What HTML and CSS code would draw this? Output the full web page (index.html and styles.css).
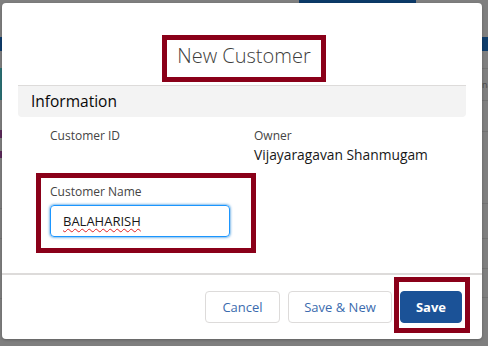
FILE: index.html
```html
<!DOCTYPE html>
<html>
<head>
<meta charset="utf-8">
<title>New Customer</title>
<link rel="stylesheet" href="styles.css">
</head>
<body>
<div class="backdrop">
  <div class="strip strip-left"></div>
  <div class="page-mid">
    <div class="topbar"><div class="topbar-seg"></div></div>
  </div>
  <div class="strip strip-right"><span class="peek">na</span></div>
</div>
<div class="modal">
  <header class="modal-header">
    <h2 class="title">New Customer</h2>
  </header>
  <div class="modal-body">
    <div class="section-bar">Information</div>
    <div class="fields">
      <div class="field">
        <div class="label">Customer ID</div>
      </div>
      <div class="field">
        <div class="label">Owner</div>
        <div class="value">Vijayaragavan Shanmugam</div>
      </div>
      <div class="field field-name">
        <div class="label">Customer Name</div>
        <div class="input"><span class="typed">BALAHARISH</span></div>
      </div>
    </div>
  </div>
  <footer class="modal-footer">
    <button class="btn btn-neutral btn-cancel">Cancel</button>
    <button class="btn btn-neutral btn-savenew">Save &amp; New</button>
    <button class="btn btn-brand">Save</button>
  </footer>
  <div class="mark mark-title"></div>
  <div class="mark mark-name"></div>
  <div class="mark mark-save"></div>
</div>
</body>
</html>
```

FILE: styles.css
```css
* { box-sizing: border-box; }
html, body {
  margin: 0;
  padding: 0;
  width: 488px;
  height: 346px;
  overflow: hidden;
  background: #7f7f7f;
  font-family: "Open Sans", "Liberation Sans", sans-serif;
}
.backdrop {
  display: flex;
  width: 488px;
  height: 346px;
}
.strip { height: 346px; }
.strip-left {
  width: 2px;
  background: linear-gradient(to bottom,
    #7f7f7f 0, #7f7f7f 37px,
    #0f3d6b 37px, #0f3d6b 51px,
    #7f7f7f 51px, #7f7f7f 68px,
    #2b7074 68px, #2b7074 100px,
    #7f7f7f 100px, #7f7f7f 130px,
    #5b2a5a 130px, #5b2a5a 138px,
    #7f7f7f 138px, #7f7f7f 151px,
    #5b2a5a 151px, #5b2a5a 158px,
    #7f7f7f 158px, #7f7f7f 208px,
    #727272 208px, #727272 209px,
    #7f7f7f 209px, #7f7f7f 238px,
    #727272 238px, #727272 239px,
    #7f7f7f 239px, #7f7f7f 298px,
    #727272 298px, #727272 299px,
    #7f7f7f 299px);
}
.page-mid { flex: 1; }
.topbar {
  display: flex;
  height: 3px;
  padding-left: 297px;
}
.topbar-seg {
  width: 117px;
  height: 3px;
  background: #0c3a68;
}
.strip-right {
  width: 6px;
  overflow: hidden;
  background: linear-gradient(to bottom,
    #7f7f7f 0, #7f7f7f 37px,
    #0f3d6b 37px, #0f3d6b 51px,
    #7f7f7f 51px, #7f7f7f 68px,
    #727272 68px, #727272 69px,
    #7f7f7f 69px, #7f7f7f 100px,
    #727272 100px, #727272 101px,
    #7f7f7f 101px, #7f7f7f 131px,
    #727272 131px, #727272 132px,
    #7f7f7f 132px, #7f7f7f 203px,
    #727272 203px, #727272 204px,
    #7f7f7f 204px, #7f7f7f 238px,
    #727272 238px, #727272 239px,
    #7f7f7f 239px, #7f7f7f 268px,
    #727272 268px, #727272 269px,
    #7f7f7f 269px, #7f7f7f 297px,
    #727272 297px, #727272 298px,
    #7f7f7f 298px);
}
.peek {
  display: block;
  margin-top: 76px;
  font-size: 9px;
  line-height: 18px;
  color: #2a2a2a;
  opacity: 0.6;
}

.modal {
  position: absolute;
  left: 2px;
  top: 3px;
  width: 480px;
  height: 336px;
  background: #ffffff;
  border-radius: 4px;
  box-shadow: 0 1px 3px rgba(0,0,0,0.25);
  display: flex;
  flex-direction: column;
}
.modal-header {
  padding: 38px 0 14px;
  display: flex;
  justify-content: center;
}
.title {
  margin: 0;
  font-size: 20px;
  font-weight: 300;
  line-height: 30px;
  color: #3e3e3c;
  padding-left: 4px;
}
.modal-body {
  flex: 1;
}
.section-bar {
  margin: 0 16px;
  height: 32px;
  background: #f3f3f3;
  border-top: 1px solid #dddbda;
  border-radius: 0 0 4px 4px;
  padding-left: 13px;
  font-size: 15.5px;
  line-height: 31px;
  color: #080707;
}
.fields {
  display: grid;
  grid-template-columns: 204px 204px;
  row-gap: 18px;
  padding: 10px 0 0 48px;
}
.label {
  font-size: 12px;
  line-height: 18px;
  color: #444444;
}
.value {
  font-size: 13.8px;
  line-height: 20px;
  color: #181818;
}
.input {
  margin-top: 4px;
  width: 180px;
  height: 32px;
  border: 1px solid #1b96ff;
  border-radius: 4px;
  box-shadow: 0 0 3px #0176d3;
  padding-left: 12px;
  font-size: 13px;
  line-height: 30px;
  color: #181818;
}
.typed {
  text-decoration: underline wavy #e02020;
  text-decoration-thickness: 1px;
  text-underline-offset: 2px;
}
.modal-footer {
  border-top: 2px solid #dddbda;
  padding: 16px 20px 16px;
  display: flex;
  justify-content: flex-end;
  gap: 8px;
}
.btn {
  height: 32px;
  padding: 0;
  border-radius: 4px;
  font-family: "Open Sans", "Liberation Sans", sans-serif;
  font-size: 13px;
  line-height: 30px;
  text-align: center;
  cursor: pointer;
}
.btn-cancel { width: 75px; }
.btn-savenew { width: 104px; }
.btn-neutral {
  background: #ffffff;
  border: 1px solid #dddbda;
  color: #3b6bae;
}
.btn-brand {
  width: 62px;
  background: #1b5297;
  border: 1px solid #1b5297;
  color: #ffffff;
  font-weight: 700;
}
.mark {
  position: absolute;
  border: 5px solid #8a0019;
  pointer-events: none;
}
.mark-title { left: 160px; top: 32px; width: 164px; height: 47px; }
.mark-name { left: 34px; top: 170px; width: 220px; height: 80px; }
.mark-save { left: 392px; top: 274px; width: 76px; height: 56px; }
```
